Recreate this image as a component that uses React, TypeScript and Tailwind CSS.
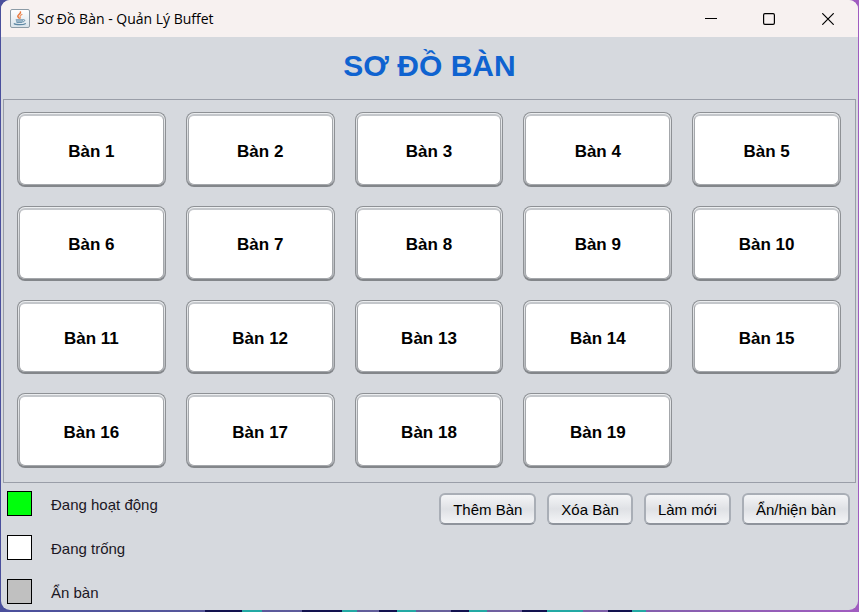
import React, { useState } from 'react';

type TableStatus = 'active' | 'empty' | 'hidden';

interface DiningTable {
  id: number;
  status: TableStatus;
}

const STATUS_COLORS: Record<TableStatus, string> = {
  active: 'bg-[#00ff0c]',
  empty: 'bg-white',
  hidden: 'bg-[#c0c0c0]',
};

const LEGEND: { status: TableStatus; label: string }[] = [
  { status: 'active', label: 'Đang hoạt động' },
  { status: 'empty', label: 'Đang trống' },
  { status: 'hidden', label: 'Ẩn bàn' },
];

const createTables = (): DiningTable[] =>
  Array.from({ length: 19 }, (_, i) => ({ id: i + 1, status: 'empty' }));

function JavaIcon() {
  return (
    <svg className="w-5 h-5 shrink-0" viewBox="0 0 20 20" fill="none" aria-hidden="true">
      <defs>
        <linearGradient id="java-frame" x1="0" y1="0" x2="0" y2="1">
          <stop offset="0" stopColor="#ffffff" />
          <stop offset="1" stopColor="#d9e3ea" />
        </linearGradient>
      </defs>
      <rect x="0.5" y="0.5" width="19" height="18" rx="1.5" fill="url(#java-frame)" stroke="#8c9ba6" />
      <path d="M10.5 3c.6 1.800-2.900 2.600-2.700 4.300.1.900 1.100 1.300 1.400 2" stroke="#e8763a" strokeWidth="1.500" strokeLinecap="round" />
      <path d="M12 5.400c-1.700.8-2.300 1.500-1.800 2.500.3.600.4 1-.1 1.500" stroke="#ef9a6c" strokeWidth="1.200" strokeLinecap="round" />
      <path d="M5.600 10.300h7.600l-.6 2.600c-.2.700-.8 1-1.400 1H7.600c-.6 0-1.200-.3-1.400-1z" fill="#6f96b0" />
      <path d="M13.200 10.700c2-.5 2.300 1.700-.5 2.200" stroke="#5d87a3" />
      <path d="M6.300 12h6" stroke="#dfe9ef" strokeWidth="0.700" />
      <path d="M4.300 14.700c1.400 1.300 9.200 1.300 11 0" stroke="#5d87a3" strokeWidth="1.300" strokeLinecap="round" />
    </svg>
  );
}

function TitleBar() {
  return (
    <header className="flex h-[37px] items-center justify-between bg-[#f7f1f0] pl-[9px]">
      <div className="flex items-center gap-[7px]">
        <JavaIcon />
        <span className="font-['Open_Sans','Noto_Sans',sans-serif] text-[14px] leading-5 text-black">
          Sơ Đồ Bàn - Quản Lý Buffet
        </span>
      </div>
      <div className="flex">
        <button type="button" aria-label="Thu nhỏ" className="flex h-9 w-[58px] items-center justify-center">
          <svg className="w-3 h-3" viewBox="0 0 12 12" fill="none" stroke="#000" aria-hidden="true">
            <path d="M0 5.500h12" />
          </svg>
        </button>
        <button type="button" aria-label="Phóng to" className="flex h-9 w-[58px] items-center justify-center">
          <svg className="w-3 h-3" viewBox="0 0 12 12" fill="none" stroke="#000" aria-hidden="true">
            <rect x="0.600" y="0.600" width="10.800" height="10.800" rx="1.300" strokeWidth="1.200" />
          </svg>
        </button>
        <button type="button" aria-label="Đóng" className="flex h-9 w-[60px] items-center justify-center">
          <svg className="w-3 h-3" viewBox="0 0 12 12" fill="none" stroke="#000" aria-hidden="true">
            <path d="M0.300 0.300l11.400 11.400M11.700 0.300L0.300 11.700" strokeWidth="1.200" />
          </svg>
        </button>
      </div>
    </header>
  );
}

function TableButton({ table, onClick }: { table: DiningTable; onClick: () => void }) {
  return (
    <button
      type="button"
      onClick={onClick}
      className="flex rounded-lg border border-[#8e9195] border-b-2 border-b-[#83868a] bg-linear-to-b from-[#eceef0] to-[#b4b7bb] px-px pt-px text-[17px] font-bold text-black"
    >
      <span className={`flex flex-1 items-center justify-center self-stretch rounded-md border border-t-2 border-[#a4a7ab] border-t-[#c4c7cb] pt-[3px] ${STATUS_COLORS[table.status]}`}>
        Bàn {table.id}
      </span>
    </button>
  );
}

function ActionButton({ label, onClick }: { label: string; onClick?: () => void }) {
  return (
    <button
      type="button"
      onClick={onClick}
      className="h-8 rounded-md border-2 border-[#a9aeb6] border-b-[#8f949c] bg-linear-to-b from-[#f4f5f7] via-[#dfe1e5] to-[#f3f4f6] px-3 pt-[2px] text-[15px] leading-5 text-black"
    >
      {label}
    </button>
  );
}

// Slice of the desktop wallpaper that shows under the window
function DesktopEdge() {
  return (
    <svg className="h-[2px] w-full" viewBox="0 0 859 2" preserveAspectRatio="none" aria-hidden="true">
      <path d="M205 0h37v2h-37zM302 0h40v2h-40zM379 0h18v2h-18zM451 0h18v2h-18zM522 0h25v2h-25zM608 0h24v2h-24z" fill="#12124f" />
      <path d="M242 0h20v2h-20zM342 0h15v2h-15zM397 0h19v2h-19zM469 0h18v2h-18zM547 0h36v2h-36zM632 0h14v2h-14z" fill="#23a9a4" />
    </svg>
  );
}

export default function App() {
  const [tables, setTables] = useState<DiningTable[]>(createTables);

  const toggleTable = (id: number) => {
    setTables(prev =>
      prev.map(t => (t.id === id ? { ...t, status: t.status === 'empty' ? 'active' : 'empty' } : t))
    );
  };

  const addTable = () => setTables(prev => [...prev, { id: prev.length + 1, status: 'empty' }]);
  const removeTable = () => setTables(prev => prev.slice(0, -1));
  const refresh = () => setTables(createTables());

  return (
    <div className="flex min-h-screen flex-col bg-linear-to-r from-[#4a4f9c] via-[#65609a] to-[#a05cc0] font-['Liberation_Sans',Arial,sans-serif]">
      <div className="mx-px flex flex-1 flex-col overflow-hidden rounded-[9px] bg-[#d6d9de]">
        <TitleBar />

        <h1 className="flex h-[62px] items-center justify-center pb-[6px] text-[30px] font-bold text-[#0f63d0]">
          SƠ ĐỒ BÀN
        </h1>

        {/* Floor plan */}
        <main className="mx-[2px] flex flex-1 border border-[#9a9ea8] pt-3 pr-[14px] pb-[14px] pl-[13px]">
          <div className="grid flex-1 auto-rows-fr grid-cols-5 gap-x-5 gap-y-[19px]">
            {tables.map(table => (
              <TableButton key={table.id} table={table} onClick={() => toggleTable(table.id)} />
            ))}
          </div>
        </main>

        {/* Legend and actions */}
        <footer className="flex items-start justify-between pt-2 pr-2 pb-[6px] pl-[6px]">
          <ul className="flex flex-col gap-[19px]">
            {LEGEND.map(item => (
              <li key={item.status} className="flex items-center gap-[19px]">
                <span className={`h-[25px] w-[25px] border border-black ${STATUS_COLORS[item.status]}`} />
                <span className="pt-[2px] text-[15px] leading-5 text-[#1b1724]">{item.label}</span>
              </li>
            ))}
          </ul>
          <div className="flex gap-[11px] pt-[2px]">
            <ActionButton label="Thêm Bàn" onClick={addTable} />
            <ActionButton label="Xóa Bàn" onClick={removeTable} />
            <ActionButton label="Làm mới" onClick={refresh} />
            <ActionButton label="Ẩn/hiện bàn" />
          </div>
        </footer>
      </div>
      <DesktopEdge />
    </div>
  );
}
